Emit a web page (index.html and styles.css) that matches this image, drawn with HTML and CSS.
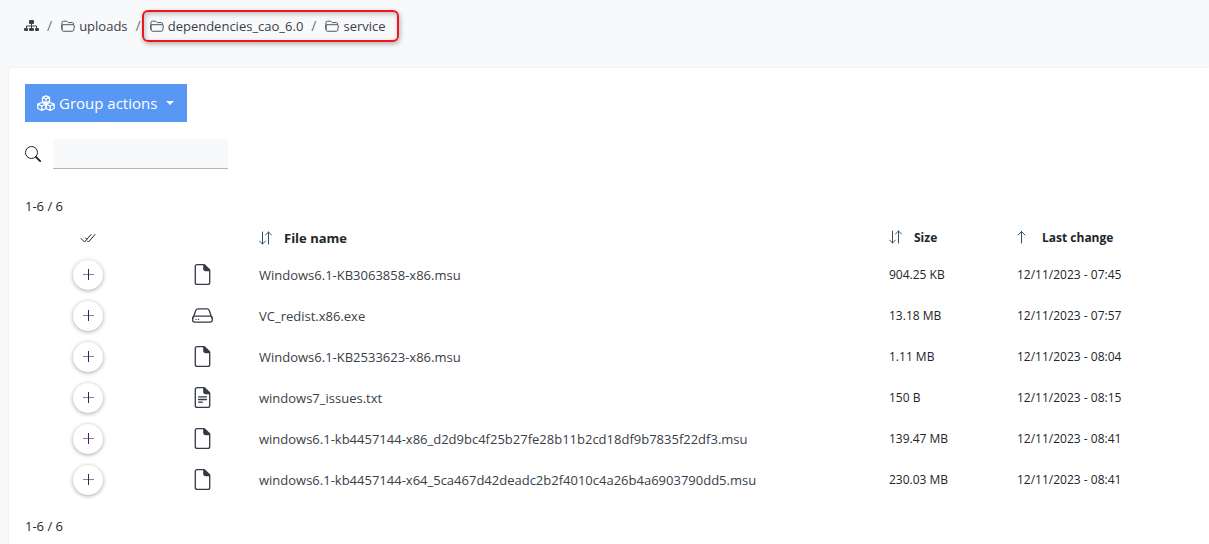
FILE: index.html
```html
<!DOCTYPE html>
<html lang="en">
  <head>
    <meta charset="UTF-8" />
    <meta name="viewport" content="width=device-width, initial-scale=1" />
    <title>Files - service</title>
    <link rel="stylesheet" href="styles.css">
  </head>
  <body>
    <!-- shared icons -->
    <svg class="sprite" aria-hidden="true">
      <symbol id="folder" viewBox="0 0 16 16">
        <path d="M1 12V4c0-.8.700-1.500 1.500-1.500h3.300c.5 0 .9.200 1.200.500l.8.800c.2.200.4.300.7.300h4.500c.8 0 1.500.7 1.500 1.500v.9M2.200 6.500h11.600c.9 0 1.500.7 1.400 1.500l-.6 4.700c-.1.700-.7 1.300-1.500 1.300H2.900c-.8 0-1.400-.6-1.500-1.300L.8 8c-.1-.8.500-1.500 1.400-1.500z" fill="none" stroke="currentColor" />
      </symbol>
      <symbol id="file" viewBox="0 0 16 16">
        <path d="M4 0h5.293A1 1 0 0 1 10 .293L13.707 4a1 1 0 0 1 .293.707V14a2 2 0 0 1-2 2H4a2 2 0 0 1-2-2V2a2 2 0 0 1 2-2M4 1a1 1 0 0 0-1 1v12a1 1 0 0 0 1 1h8a1 1 0 0 0 1-1V5.500h-2.500a2 2 0 0 1-2-2V1z" fill="currentColor" fill-rule="evenodd" />
      </symbol>
      <symbol id="file-text" viewBox="0 0 16 16">
        <use href="#file" />
        <path d="M5 7.500h6M5 9.500h6M5 11.500h3" fill="none" stroke="currentColor" stroke-linecap="round" />
      </symbol>
      <symbol id="drive" viewBox="0 0 16 16">
        <path d="M.6 10.500l2.200-6.100c.3-.8.900-1.400 1.700-1.400h7c.8 0 1.400.6 1.700 1.400l2.200 6.100M2 8.500h12a1.500 1.500 0 0 1 1.500 1.500v1.500a1.500 1.500 0 0 1-1.500 1.500H2a1.500 1.500 0 0 1-1.500-1.500V10A1.500 1.500 0 0 1 2 8.500z" fill="none" stroke="currentColor" />
        <circle cx="3" cy="11" r=".5" fill="currentColor" />
        <circle cx="5" cy="11" r=".5" fill="currentColor" />
      </symbol>
      <symbol id="plus" viewBox="0 0 16 16">
        <path d="M3 7.500h11" fill="none" stroke="#8a8290" />
        <path d="M8.500 2v11" fill="none" stroke="#4a1a5c" />
      </symbol>
      <symbol id="sort" viewBox="0 0 14 14">
        <path d="M3.500 1v12M.5 10l3 3 3-3" fill="none" stroke="currentColor" stroke-linecap="round" />
        <path d="M9.500 13V1M6.500 4l3-3 3 3" fill="none" stroke="currentColor" stroke-linecap="round" />
      </symbol>
      <symbol id="sort-up" viewBox="0 0 14 14">
        <path d="M4.500 13V1.500M1 5l3.500-3.500L8 5" fill="none" stroke="currentColor" stroke-linecap="round" />
      </symbol>
    </svg>

    <nav aria-label="breadcrumb">
      <ol class="breadcrumb">
        <li>
          <a href="#" aria-label="Root">
            <svg class="icon-root" viewBox="0 0 15 12" fill="currentColor">
              <rect x="5" y="0" width="5" height="4" rx="1" />
              <rect x="0" y="8" width="4" height="3" rx="1" />
              <rect x="5" y="8" width="5" height="3" rx="1" />
              <rect x="11" y="8" width="4" height="3" rx="1" />
              <path d="M7.500 3v6M2.500 8.500V6h10v2.500" fill="none" stroke="currentColor" />
            </svg>
          </a>
        </li>
        <li><a href="#"><svg class="icon"><use href="#folder" /></svg>uploads</a></li>
        <li class="current">
          <ol class="breadcrumb">
            <li><a href="#"><svg class="icon"><use href="#folder" /></svg>dependencies_cao_6.0</a></li>
            <li><a href="#"><svg class="icon"><use href="#folder" /></svg>service</a></li>
          </ol>
        </li>
      </ol>
    </nav>

    <main class="panel">
      <button class="group-btn" type="button">
        <svg class="icon-cubes" viewBox="0 0 18 16" fill="none" stroke="currentColor" stroke-width="1.300" stroke-linejoin="round">
          <path d="M9 .8l3.500 1.500v4L9 8 5.500 6.300v-4zM5.500 2.300L9 4l3.500-1.700M9 4v4" />
          <path d="M4.800 7.500L9 9.200v4.300l-4.200 1.800L.8 13.500V9.200zM.8 9.200l4 1.800L9 9.200M4.800 11v4.300" />
          <path d="M13.200 7.500L9 9.200v4.300l4.200 1.800 4-1.800V9.200zM9 9.200l4.200 1.800 4-1.800M13.200 11v4.300" />
        </svg>
        Group actions
        <span class="caret"></span>
      </button>

      <div class="search">
        <label for="search" aria-label="Search">
          <svg class="icon" viewBox="0 0 16 16" fill="none" stroke="currentColor">
            <circle cx="6.500" cy="6.500" r="6" />
            <path d="M11 11l4.200 4.200" stroke-width="1.800" stroke-linecap="round" />
          </svg>
        </label>
        <input id="search" type="text">
      </div>

      <p class="count">1-6 / 6</p>

      <table class="files">
        <colgroup>
          <col class="col-select">
          <col class="col-type">
          <col>
          <col class="col-size">
          <col class="col-date">
        </colgroup>
        <thead>
          <tr>
            <th>
              <svg class="icon-all" viewBox="0 0 16 12" fill="none" stroke="currentColor">
                <path d="M1 6.500l3.500 3.500L11 2.500M5.500 6l1 1M7.500 9l1 1L15 2.500" stroke-linecap="round" />
              </svg>
            </th>
            <th></th>
            <th class="name"><svg class="icon-sort"><use href="#sort" /></svg>File name</th>
            <th><svg class="icon-sort"><use href="#sort" /></svg>Size</th>
            <th><svg class="icon-sort"><use href="#sort-up" /></svg>Last change</th>
          </tr>
        </thead>
        <tbody>
          <tr>
            <td><button class="add" type="button" aria-label="Select"><svg><use href="#plus" /></svg></button></td>
            <td><svg class="icon-file"><use href="#file" /></svg></td>
            <td class="name"><a href="#">Windows6.1-KB3063858-x86.msu</a></td>
            <td>904.25 KB</td>
            <td>12/11/2023 - 07:45</td>
          </tr>
          <tr>
            <td><button class="add" type="button" aria-label="Select"><svg><use href="#plus" /></svg></button></td>
            <td><svg class="icon-file"><use href="#drive" /></svg></td>
            <td class="name"><a href="#">VC_redist.x86.exe</a></td>
            <td>13.18 MB</td>
            <td>12/11/2023 - 07:57</td>
          </tr>
          <tr>
            <td><button class="add" type="button" aria-label="Select"><svg><use href="#plus" /></svg></button></td>
            <td><svg class="icon-file"><use href="#file" /></svg></td>
            <td class="name"><a href="#">Windows6.1-KB2533623-x86.msu</a></td>
            <td>1.11 MB</td>
            <td>12/11/2023 - 08:04</td>
          </tr>
          <tr>
            <td><button class="add" type="button" aria-label="Select"><svg><use href="#plus" /></svg></button></td>
            <td><svg class="icon-file"><use href="#file-text" /></svg></td>
            <td class="name"><a href="#">windows7_issues.txt</a></td>
            <td>150 B</td>
            <td>12/11/2023 - 08:15</td>
          </tr>
          <tr>
            <td><button class="add" type="button" aria-label="Select"><svg><use href="#plus" /></svg></button></td>
            <td><svg class="icon-file"><use href="#file" /></svg></td>
            <td class="name"><a href="#">windows6.1-kb4457144-x86_d2d9bc4f25b27fe28b11b2cd18df9b7835f22df3.msu</a></td>
            <td>139.47 MB</td>
            <td>12/11/2023 - 08:41</td>
          </tr>
          <tr>
            <td><button class="add" type="button" aria-label="Select"><svg><use href="#plus" /></svg></button></td>
            <td><svg class="icon-file"><use href="#file" /></svg></td>
            <td class="name"><a href="#">windows6.1-kb4457144-x64_5ca467d42deadc2b2f4010c4a26b4a6903790dd5.msu</a></td>
            <td>230.03 MB</td>
            <td>12/11/2023 - 08:41</td>
          </tr>
        </tbody>
      </table>

      <p class="count">1-6 / 6</p>
    </main>
  </body>
</html>
```
FILE: styles.css
```css
* {
  box-sizing: border-box;
}

body {
  margin: 0;
  background: #f8f9fb;
  color: #212529;
  font-family: "Segoe UI", "Open Sans", "Noto Sans", sans-serif;
  font-size: 12px;
  line-height: 20px;
}

a {
  color: #3a4047;
  text-decoration: none;
}

svg {
  display: block;
  flex: none;
}

.sprite {
  display: none;
}

.icon {
  width: 16px;
  height: 16px;
}

/* breadcrumb */
nav {
  padding: 16px 24px 32px;
}

.breadcrumb {
  display: flex;
  align-items: center;
  list-style: none;
  margin: 0;
  padding: 0;
  font-size: 13px;
}

.breadcrumb li {
  display: flex;
  align-items: center;
}

.breadcrumb li + li::before {
  content: "/";
  color: #6c757d;
  font-size: 14px;
  padding: 0 9px 0 8px;
}

.breadcrumb a {
  display: flex;
  align-items: center;
  gap: 4px;
}

.breadcrumb .icon {
  width: 14px;
  height: 14px;
}

.breadcrumb .icon-root {
  width: 15px;
  height: 12px;
}

.current {
  position: relative;
}

.current::after {
  content: "";
  position: absolute;
  inset: -6px -13px -6px 14px;
  border: 2px solid #f3131a;
  border-radius: 6px;
  box-shadow: 1px 2px 5px rgba(0, 0, 0, 0.3), inset 1px 2px 5px rgba(0, 0, 0, 0.25);
  pointer-events: none;
}

/* panel */
.panel {
  margin-left: 9px;
  padding: 16px;
  background: #fff;
  box-shadow: 0 0 3px rgba(0, 0, 0, 0.06);
}

.group-btn {
  display: flex;
  align-items: center;
  gap: 4px;
  height: 38px;
  padding: 0 13px 0 12px;
  border: none;
  background: #5897f4;
  color: #fff;
  font-family: inherit;
  font-size: 15px;
  cursor: pointer;
}

.icon-cubes {
  width: 18px;
  height: 16px;
}

.caret {
  margin-left: 5px;
  border: 4px solid transparent;
  border-top-color: #fff;
  border-bottom: none;
}

.search {
  display: flex;
  align-items: center;
  gap: 12px;
  margin-top: 17px;
}

.search input {
  width: 175px;
  height: 30px;
  padding: 4px 8px;
  border: none;
  border-bottom: 1px solid #b5b5b5;
  background: #f8f9fb;
  font: inherit;
}

.count {
  margin: 27px 0 0;
  font-size: 13px;
}

/* file list */
.files {
  width: 100%;
  margin-top: 5px;
  border-collapse: collapse;
  table-layout: fixed;
}

.files + .count {
  margin-top: 16px;
}

.col-select {
  width: 126px;
}

.col-type {
  width: 102px;
}

.col-size {
  width: 128px;
}

.col-date {
  width: 182px;
}

.files th,
.files td {
  height: 41px;
  padding: 0 6px;
  text-align: left;
  white-space: nowrap;
}

.files th {
  height: 33px;
}

.files .name {
  font-size: 13px;
}

.files svg {
  margin: 0 auto;
}

.files .icon-sort {
  display: inline-block;
  width: 14px;
  height: 14px;
  margin-right: 11px;
  color: #35506c;
  vertical-align: -2px;
}

.icon-all {
  width: 16px;
  height: 12px;
}

.icon-file {
  width: 21px;
  height: 21px;
  color: #343a46;
}

.add {
  display: block;
  width: 30px;
  height: 30px;
  margin: 0 auto;
  padding: 0;
  border: none;
  border-radius: 50%;
  background: #fff;
  box-shadow: 0 1px 4px rgba(0, 0, 0, 0.35);
  cursor: pointer;
}

.add svg {
  width: 16px;
  height: 16px;
  margin: 0 auto;
}
```
